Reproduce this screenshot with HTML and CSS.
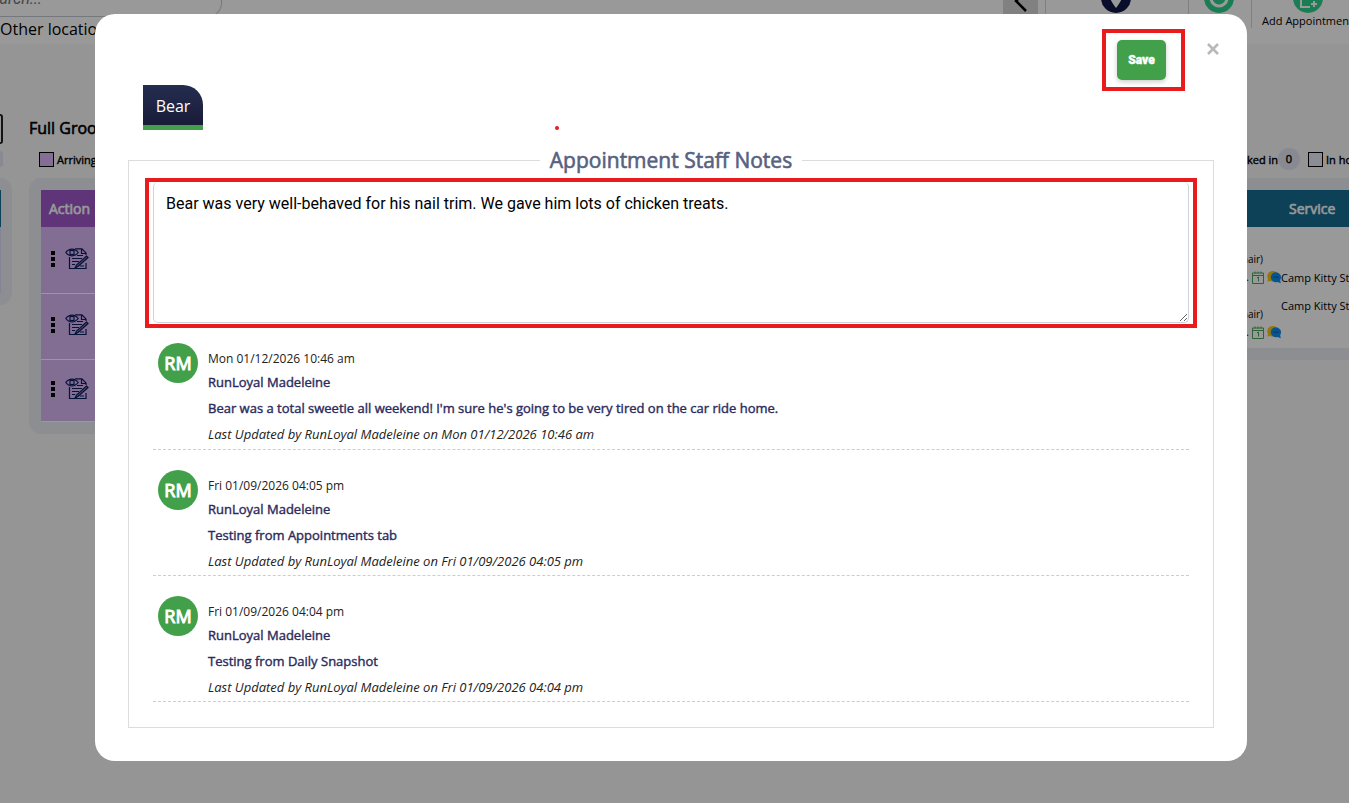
FILE: index.html
```html
<!DOCTYPE html>
<html lang="en">
<head>
    <meta charset="UTF-8">
    <meta name="viewport" content="width=device-width, initial-scale=1.0">
    <title>Appointment Staff Notes</title>
    <link rel="stylesheet" href="styles.css">
</head>
<body>

    <!-- Shared icons -->
    <svg class="sprite" aria-hidden="true">
        <symbol id="icon-dots" viewBox="0 0 4 16">
            <path d="M0 0h4v4H0zM0 6h4v4H0zM0 12h4v4H0z" fill="#000"/>
        </symbol>
        <symbol id="icon-note" viewBox="0 0 24 22">
            <g fill="none" stroke="#0b1f5c" stroke-width="1.200">
                <path d="M.8 4.500C4 0 10 0 13.200 4.500C10 9 4 9 .8 4.500z"/>
                <rect x="5" y="2.500" width="4" height="4"/>
                <path d="M4.500 9v11.500h16.500V15M10 .8h7l4 4.200V7M16.500 1v4.500h4"/>
                <path d="M12 7.500h6M7 10.500h10M7 13.500h7M7 16.500h3M15 18h4"/>
                <path d="M23 9.500L13 18.500l-3 1.500 1.500-3L21.500 8z" fill="#0b1f5c" fill-opacity=".4"/>
            </g>
        </symbol>
        <symbol id="icon-calendar" viewBox="0 0 12 13">
            <path d="M.5 2h11v10.500H.5zM.5 4.500h11M3 .5v2M6 .5v2M9 .5v2" fill="none" stroke="#4ba65a"/>
            <path d="M5 6.800l1.500-.8v4.500" fill="none" stroke="#4ba65a"/>
        </symbol>
        <symbol id="icon-chat" viewBox="0 0 14 13">
            <path d="M5.500 0a5.300 5.300 0 0 0-4.500 8L.3 10.500 3.500 10A5.300 5.300 0 1 0 5.500 0z" fill="#f5c518"/>
            <path d="M8.800 1.200a5 5 0 1 0 1.700 9.700l3.300 1.300-.7-3.200A5 5 0 0 0 8.800 1.200z" fill="#0a8cf0"/>
            <path d="M6.500 6.200h5" stroke="#0760b0"/>
        </symbol>
    </svg>

    <div class="page">
        <header class="topbar">
            <div class="topbar-left">
                <input class="search" type="text" placeholder="Search..." aria-label="Search">
                <a class="locations" href="#">Other locations</a>
            </div>
            <nav class="toolbar">
                <button class="collapse" aria-label="Collapse">
                    <svg width="14" height="22" viewBox="0 0 14 22"><path d="M12 1L2 11l10 10" fill="none" stroke="#000" stroke-width="2.500"/></svg>
                </button>
                <a class="tool tool-location" href="#" aria-label="Location">
                    <svg width="30" height="30" viewBox="0 0 30 30"><circle cx="15" cy="15" r="15" fill="#0f1648"/><path d="M15 25c-3-4-6-8-6-12a6 6 0 0 1 12 0c0 4-3 8-6 12z" fill="#fff"/></svg>
                </a>
                <a class="tool tool-time" href="#" aria-label="Time">
                    <svg width="30" height="30" viewBox="0 0 30 30"><circle cx="15" cy="15" r="15" fill="#2ed18b"/><circle cx="15" cy="15" r="8" fill="none" stroke="#fff" stroke-width="3"/><path d="M15 10v6h4" fill="none" stroke="#fff" stroke-width="2"/></svg>
                </a>
                <a class="tool tool-add" href="#">
                    <svg width="30" height="30" viewBox="0 0 30 30"><circle cx="15" cy="15" r="15" fill="#2ed18b"/><path d="M23 16V9H8v15h9" fill="none" stroke="#fff" stroke-width="2"/><path d="M21 18v6M18 21h6" stroke="#fff" stroke-width="2"/></svg>
                    <span>Add Appointment</span>
                </a>
            </nav>
        </header>

        <main class="board">
            <section class="column column-edge">
                <div class="edge-box"></div>
                <div class="edge-count"></div>
                <div class="panel">
                    <div class="edge-head"></div>
                    <div class="edge-body"></div>
                </div>
            </section>

            <section class="column">
                <h2>Full Groom</h2>
                <div class="legend-row"><i class="swatch swatch-purple"></i>Arriving</div>
                <div class="panel">
                    <table class="grooming">
                        <tr><th>Action</th></tr>
                        <tr><td><svg class="dots"><use href="#icon-dots"/></svg><svg class="note-icon"><use href="#icon-note"/></svg></td></tr>
                        <tr><td><svg class="dots"><use href="#icon-dots"/></svg><svg class="note-icon"><use href="#icon-note"/></svg></td></tr>
                        <tr><td><svg class="dots"><use href="#icon-dots"/></svg><svg class="note-icon"><use href="#icon-note"/></svg></td></tr>
                    </table>
                </div>
            </section>

            <section class="column column-lodging">
                <div class="legend-row legend-end">
                    Checked in<span class="count">0</span>
                    <span class="in-house"><i class="swatch"></i>In house</span>
                </div>
                <div class="panel">
                    <table class="lodging">
                        <tr><th>Pet</th><th class="service">Service</th></tr>
                        <tr class="first">
                            <td class="pet"><div class="pet-type">(Chair)</div><div class="icons">.<svg class="cal"><use href="#icon-calendar"/></svg><svg class="chat"><use href="#icon-chat"/></svg></div></td>
                            <td class="service">Camp Kitty Stay</td>
                        </tr>
                        <tr class="second">
                            <td class="pet"><div class="pet-type">(Chair)</div><div class="icons">.<svg class="cal"><use href="#icon-calendar"/></svg><svg class="chat"><use href="#icon-chat"/></svg></div></td>
                            <td class="service">Camp Kitty Stay</td>
                        </tr>
                    </table>
                </div>
            </section>
        </main>
    </div>

    <div class="overlay">
        <div class="modal" role="dialog" aria-labelledby="notes-title">
            <div class="modal-actions">
                <div class="save-wrap">
                    <button class="save">Save</button>
                </div>
                <button class="close" aria-label="Close">
                    <svg width="12" height="12" viewBox="0 0 12 12"><path d="M1 1l10 10M11 1L1 11" stroke="#b8b8b8" stroke-width="2.600"/></svg>
                </button>
            </div>

            <button class="tab">Bear</button>
            <span class="red-dot"></span>

            <fieldset class="notes">
                <legend id="notes-title">Appointment Staff Notes</legend>
                <div class="note-wrap">
                    <textarea aria-labelledby="notes-title">Bear was very well-behaved for his nail trim. We gave him lots of chicken treats.</textarea>
                </div>

                <article class="note">
                    <div class="avatar">RM</div>
                    <div class="note-body">
                        <time>Mon 01/12/2026 10:46 am</time>
                        <h4>RunLoyal Madeleine</h4>
                        <p class="message">Bear was a total sweetie all weekend! I'm sure he's going to be very tired on the car ride home.</p>
                        <p class="updated">Last Updated by RunLoyal Madeleine on Mon 01/12/2026 10:46 am</p>
                    </div>
                </article>
                <article class="note">
                    <div class="avatar">RM</div>
                    <div class="note-body">
                        <time>Fri 01/09/2026 04:05 pm</time>
                        <h4>RunLoyal Madeleine</h4>
                        <p class="message">Testing from Appointments tab</p>
                        <p class="updated">Last Updated by RunLoyal Madeleine on Fri 01/09/2026 04:05 pm</p>
                    </div>
                </article>
                <article class="note">
                    <div class="avatar">RM</div>
                    <div class="note-body">
                        <time>Fri 01/09/2026 04:04 pm</time>
                        <h4>RunLoyal Madeleine</h4>
                        <p class="message">Testing from Daily Snapshot</p>
                        <p class="updated">Last Updated by RunLoyal Madeleine on Fri 01/09/2026 04:04 pm</p>
                    </div>
                </article>
            </fieldset>
        </div>
    </div>

</body>
</html>
```

FILE: styles.css
```css
* {
    box-sizing: border-box;
}

body {
    margin: 0;
    height: 100vh;
    overflow: hidden;
    font-family: "Open Sans", sans-serif;
    font-size: 12px;
    color: #000;
    background: #f8f8fb;
}

button {
    font-family: inherit;
    border: none;
    padding: 0;
    cursor: pointer;
}

.sprite {
    display: none;
}

/* Regular weight thickened with a stroke */
h2,
th,
legend {
    font-weight: 400;
    -webkit-text-stroke: 0.6px;
}

h4,
.legend-row,
.message {
    font-weight: 400;
    -webkit-text-stroke: 0.4px;
}

/* Page behind the dialog */
.topbar {
    display: flex;
    justify-content: space-between;
    height: 44px;
    background: #fff;
    overflow: hidden;
}

.topbar-left {
    display: flex;
    flex-direction: column;
    justify-content: flex-end;
    width: 222px;
}

.search {
    flex-shrink: 0;
    width: 100%;
    height: 40px;
    padding: 2px 0 0;
    text-indent: -18px;
    border: 1px solid #c4c8d0;
    border-left: none;
    border-radius: 0 14px 14px 0;
    font-family: Roboto, sans-serif;
    font-size: 16px;
    font-style: italic;
}

.locations {
    padding-bottom: 3px;
    color: #000;
    font-size: 16px;
    line-height: 24px;
    text-decoration: none;
}

.toolbar {
    display: flex;
    align-items: flex-start;
    height: 28px;
}

.collapse {
    display: flex;
    align-items: flex-end;
    justify-content: center;
    width: 35px;
    height: 14px;
    padding-bottom: 2px;
    background: #d8d8d8;
}

.collapse svg,
.tool svg {
    flex-shrink: 0;
}

.tool {
    display: flex;
    flex-direction: column;
    align-items: center;
    justify-content: flex-end;
    height: 28px;
    color: #000;
    font-size: 11px;
    line-height: 15px;
    text-decoration: none;
    white-space: nowrap;
    border-left: 1px solid #d5d5d5;
}

.tool-location {
    width: 143px;
    margin-left: 7px;
    padding: 0 2px 15px 0;
}

.tool-time {
    width: 63px;
    padding: 0 2px 15px 0;
}

.tool-add {
    width: 98px;
    padding-left: 14px;
}

.board {
    display: grid;
    grid-template-columns: 12px 1fr 1fr;
    gap: 17px;
    padding-top: 70px;
}

.column {
    min-width: 0;
}

h2 {
    margin: 0;
    height: 30px;
    font-size: 16px;
    line-height: 28px;
}

.legend-row {
    display: flex;
    align-items: center;
    height: 30px;
    margin-bottom: 4px;
    padding-left: 10px;
    font-size: 11px;
    white-space: nowrap;
}

.swatch {
    flex-shrink: 0;
    width: 15px;
    height: 15px;
    margin-right: 3px;
    border: 1px solid #000;
    background: #e8ecf5;
}

.swatch-purple {
    background: #deb8fa;
}

.panel {
    padding: 12px;
    border-radius: 12px;
    background: #ebedf3;
}

.edge-box {
    width: 3px;
    height: 30px;
    border: 2px solid #222;
    border-left: none;
    border-radius: 0 8px 8px 0;
}

.edge-count {
    width: 3px;
    height: 16px;
    margin: 7px 0 11px;
    border-radius: 0 8px 8px 0;
    background: #e2e6f0;
}

.column-edge .panel {
    padding-left: 0;
    border-radius: 0 12px 12px 0;
}

.edge-head {
    width: 1px;
    height: 37px;
    background: #176d93;
}

.edge-body {
    width: 1px;
    height: 66px;
    background: #dadaf5;
}

table {
    width: 100%;
    border-collapse: collapse;
}

th {
    height: 37px;
    padding: 0 8px;
    color: #fff;
    font-size: 14px;
    text-align: left;
}

.grooming th {
    background: #9e58c8;
}

.grooming td {
    height: 66px;
    padding: 0 10px 2px;
    background: #d9b6f6;
    border-bottom: 1px solid #fff;
}

.grooming tr:last-child td {
    height: 62px;
}

.dots {
    width: 4px;
    height: 16px;
    margin-right: 10px;
    vertical-align: middle;
}

.note-icon {
    width: 24px;
    height: 22px;
    vertical-align: middle;
}

.column-lodging {
    padding-top: 30px;
    overflow: hidden;
}

.legend-end {
    justify-content: flex-end;
}

.count {
    width: 22px;
    margin-right: 8px;
    border-radius: 50%;
    background: #e2e6f0;
    line-height: 22px;
    text-align: center;
}

.in-house {
    display: flex;
    align-items: center;
    width: 41px;
}

.column-lodging .panel {
    padding-right: 0;
    border-radius: 12px 0 0 12px;
}

.lodging {
    table-layout: fixed;
    background: #fff;
}

.lodging th {
    background: #176d93;
}

.lodging .service {
    width: 68px;
}

.lodging td {
    padding: 0;
    font-size: 11px;
    line-height: 18px;
    white-space: nowrap;
    vertical-align: top;
}

.lodging .first td {
    height: 66px;
    padding-top: 42px;
}

.lodging .first .pet {
    padding-top: 23px;
}

.lodging .second td {
    height: 55px;
    padding-top: 4px;
}

.lodging .second .pet {
    padding-top: 12px;
}

.lodging .pet {
    font-size: 10px;
    text-align: right;
}

.pet-type {
    padding-right: 18px;
}

.icons {
    display: flex;
    align-items: center;
    justify-content: flex-end;
    height: 18px;
}

.cal {
    width: 12px;
    height: 13px;
    margin: 0 3px;
}

.chat {
    width: 14px;
    height: 13px;
}

/* Dialog */
.overlay {
    position: fixed;
    inset: 0;
    padding: 14px 102px 0 95px;
    background: rgba(0, 0, 0, 0.4);
}

.modal {
    position: relative;
    padding: 15px 33px 33px;
    border-radius: 20px;
    background: #fff;
}

.modal-actions {
    display: flex;
    justify-content: flex-end;
    gap: 22px;
    height: 56px;
}

.save-wrap {
    flex-shrink: 0;
    height: 62px;
    padding: 7px 15px 7px 11px;
    border: 4px solid #e81c1c;
}

.save {
    width: 49px;
    height: 40px;
    border-radius: 5px;
    background: #43a04a;
    box-shadow: 0 2px 5px rgba(0, 0, 0, 0.2);
    color: #fff;
    font-family: Roboto, sans-serif;
    font-size: 12px;
    font-weight: 900;
    -webkit-text-stroke: 0.4px;
}

.close {
    display: flex;
    width: 12px;
    height: 12px;
    margin-top: 14px;
    margin-right: -5px;
    background: none;
}

.tab {
    display: block;
    width: 60px;
    height: 45px;
    margin-left: 15px;
    padding-top: 2px;
    border-bottom: 5px solid #43a04a;
    border-radius: 0 20px 0 0;
    background: linear-gradient(#242d50, #191b38);
    color: #fff;
    font-size: 16px;
}

.red-dot {
    position: absolute;
    top: 112px;
    left: 460px;
    width: 4px;
    height: 4px;
    border-radius: 50%;
    background: #e81c1c;
}

.notes {
    margin: 16px 0 0;
    padding: 0 16px 25px;
    border: 1px solid #dcdcdc;
}

legend {
    margin: 0 auto;
    padding: 0 10px;
    color: #56627f;
    font-size: 21px;
    line-height: 28px;
}

.note-wrap {
    display: flex;
    height: 150px;
    margin-top: 4px;
    border: 4px solid #e81c1c;
    padding: 0 4px 1px;
}

textarea {
    flex: 1;
    padding: 12px;
    border: 1px solid #ced4da;
    border-top: none;
    border-radius: 5px;
    outline: none;
    font-family: Roboto, sans-serif;
    font-size: 16px;
    line-height: 20px;
    color: #000;
}

.note {
    display: flex;
    gap: 10px;
    height: 126px;
    margin: 0 8px;
    padding: 20px 5px 0;
    border-bottom: 1px dashed #add8e6;
}

.note-wrap + .note {
    height: 122px;
    padding-top: 15px;
}

.avatar {
    width: 40px;
    height: 40px;
    border-radius: 50%;
    background: #43a04a;
    color: #fff;
    font-size: 18px;
    line-height: 40px;
    text-align: center;
    -webkit-text-stroke: 1px;
}

.note-body {
    padding-top: 4px;
    color: #222;
}

time {
    display: block;
    font-size: 12px;
    line-height: 24px;
}

h4,
.message {
    margin: 0;
    color: #2b2b5c;
    font-size: 13px;
    line-height: 22px;
}

.message {
    line-height: 30px;
}

.updated {
    margin: 0;
    font-size: 13px;
    font-style: italic;
    line-height: 22px;
}
```
